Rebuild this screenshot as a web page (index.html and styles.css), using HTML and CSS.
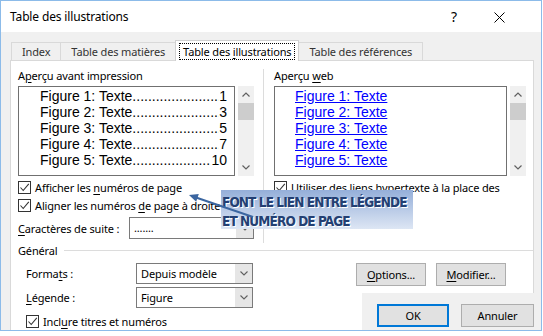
FILE: index.html
```html
<!DOCTYPE html>
<html lang="fr">
<head>
    <meta charset="UTF-8">
    <title>Table des illustrations</title>
    <link rel="stylesheet" href="styles.css">
</head>
<body>

<div class="dialog">
    <div class="titlebar">
        <span class="title">Table des illustrations</span>
        <span class="help">?</span>
        <span class="close">
            <svg width="11" height="11" viewBox="0 0 11 11"><path d="M0.5 0.5 L10.5 10.5 M10.5 0.5 L0.5 10.5" stroke="#000" stroke-width="1"/></svg>
        </span>
    </div>

    <!-- Tabs -->
    <div class="tabs">
        <div class="tab">Index</div>
        <div class="tab">Table des matières</div>
        <div class="tab active"><span class="focus">Table des <u>i</u>llustrations</span></div>
        <div class="tab">Table des références</div>
    </div>

    <div class="panel">
        <div class="previews">
            <!-- Print preview -->
            <div class="preview-col left">
                <div class="label">A<u>p</u>erçu avant impression</div>
                <div class="listrow">
                    <div class="listbox print">
                        <div class="entry"><span>Figure 1: Texte</span><span class="lead">........................................</span><span>1</span></div>
                        <div class="entry"><span>Figure 2: Texte</span><span class="lead">........................................</span><span>3</span></div>
                        <div class="entry"><span>Figure 3: Texte</span><span class="lead">........................................</span><span>5</span></div>
                        <div class="entry"><span>Figure 4: Texte</span><span class="lead">........................................</span><span>7</span></div>
                        <div class="entry"><span>Figure 5: Texte</span><span class="lead">........................................</span><span>10</span></div>
                    </div>
                    <div class="scrollbar">
                        <svg class="arrow" width="8" height="5" viewBox="0 0 8 5"><path d="M0.5 4.5 L4 1 L7.5 4.5" fill="none" stroke="#606060" stroke-width="1.2"/></svg>
                        <div class="thumb"></div>
                        <div class="track"></div>
                        <svg class="arrow" width="8" height="5" viewBox="0 0 8 5"><path d="M0.5 0.5 L4 4 L7.5 0.5" fill="none" stroke="#606060" stroke-width="1.2"/></svg>
                    </div>
                </div>

                <label class="check">
                    <span class="box"><svg width="11" height="11" viewBox="0 0 11 11"><path d="M1.5 5.5 L4.2 8.5 L9.8 1.8" fill="none" stroke="#333" stroke-width="1.1"/></svg></span>
                    <span>Afficher les <u>n</u>uméros de page</span>
                </label>
                <label class="check">
                    <span class="box"><svg width="11" height="11" viewBox="0 0 11 11"><path d="M1.5 5.5 L4.2 8.5 L9.8 1.8" fill="none" stroke="#333" stroke-width="1.1"/></svg></span>
                    <span>Aligner les numéros <u>d</u>e page à droite</span>
                </label>

                <div class="field-row suite">
                    <span class="field-label"><u>C</u>aractères de suite :</span>
                    <div class="select">
                        <span class="value">.......</span>
                        <span class="drop"><svg width="8" height="5" viewBox="0 0 8 5"><path d="M0.5 0.5 L4 4 L7.5 0.5" fill="none" stroke="#606060" stroke-width="1.1"/></svg></span>
                    </div>
                </div>
            </div>

            <!-- Web preview -->
            <div class="preview-col right">
                <div class="label">Aperçu <u>w</u>eb</div>
                <div class="listrow">
                    <div class="listbox web">
                        <a href="#">Figure 1: Texte</a>
                        <a href="#">Figure 2: Texte</a>
                        <a href="#">Figure 3: Texte</a>
                        <a href="#">Figure 4: Texte</a>
                        <a href="#">Figure 5: Texte</a>
                    </div>
                    <div class="scrollbar">
                        <svg class="arrow" width="8" height="5" viewBox="0 0 8 5"><path d="M0.5 4.5 L4 1 L7.5 4.5" fill="none" stroke="#606060" stroke-width="1.2"/></svg>
                        <div class="thumb"></div>
                        <div class="track"></div>
                        <svg class="arrow" width="8" height="5" viewBox="0 0 8 5"><path d="M0.5 0.5 L4 4 L7.5 0.5" fill="none" stroke="#606060" stroke-width="1.2"/></svg>
                    </div>
                </div>

                <label class="check">
                    <span class="box"><svg width="11" height="11" viewBox="0 0 11 11"><path d="M1.5 5.5 L4.2 8.5 L9.8 1.8" fill="none" stroke="#333" stroke-width="1.1"/></svg></span>
                    <span><u>U</u>tiliser des liens hypertexte à la place des</span>
                </label>
            </div>
        </div>

        <!-- General section -->
        <div class="group-title"><span>Général</span></div>
        <div class="general">
            <div class="fields">
                <div class="field-row">
                    <span class="field-label">Forma<u>t</u>s :</span>
                    <div class="select">
                        <span class="value">Depuis modèle</span>
                        <span class="drop"><svg width="8" height="5" viewBox="0 0 8 5"><path d="M0.5 0.5 L4 4 L7.5 0.5" fill="none" stroke="#606060" stroke-width="1.1"/></svg></span>
                    </div>
                </div>
                <div class="field-row">
                    <span class="field-label"><u>L</u>égende :</span>
                    <div class="select">
                        <span class="value">Figure</span>
                        <span class="drop"><svg width="8" height="5" viewBox="0 0 8 5"><path d="M0.5 0.5 L4 4 L7.5 0.5" fill="none" stroke="#606060" stroke-width="1.1"/></svg></span>
                    </div>
                </div>
                <label class="check">
                    <span class="box"><svg width="11" height="11" viewBox="0 0 11 11"><path d="M1.5 5.5 L4.2 8.5 L9.8 1.8" fill="none" stroke="#333" stroke-width="1.1"/></svg></span>
                    <span>Incl<u>u</u>re titres et numéros</span>
                </label>
            </div>
            <div class="actions">
                <button class="btn"><u>O</u>ptions...</button>
                <button class="btn"><u>M</u>odifier...</button>
            </div>
        </div>
    </div>

    <!-- Dialog buttons, drawn over the panel corner -->
    <div class="footer">
        <button class="btn default">OK</button>
        <button class="btn">Annuler</button>
    </div>

    <!-- Annotation -->
    <div class="note">FONT LE LIEN ENTRE LÉGENDE<br>ET NUMÉRO DE PAGE</div>
    <svg class="note-arrow" width="80" height="40" viewBox="0 0 80 40">
        <path d="M66 28 L9 8.5" stroke="#3b66a0" stroke-width="2" fill="none"/>
        <path d="M2 6 L11.8 5.1 L9.2 12.7 Z" fill="#3b66a0"/>
    </svg>
</div>

</body>
</html>
```

FILE: styles.css
```css
body { margin: 0; background: #fff; font-family: "Noto Sans", sans-serif; font-size: 11px; letter-spacing: -0.15px; color: #000; }
u { text-decoration: underline; text-underline-offset: 2px; }

.dialog { position: relative; width: 542px; height: 331px; box-sizing: border-box; border: 1px solid #8cbbe9; background: #f0f0f0; overflow: hidden; }

/* Title bar */
.titlebar { height: 31px; background: #fff; display: flex; align-items: center; padding-left: 9px; font-size: 12px; }
.title { flex: 1; }
.help { width: 20px; font-size: 14px; margin-right: 12px; text-align: center; }
.close { width: 46px; display: flex; justify-content: center; padding-top: 1px; margin-right: 19px; }

/* Tabs */
.tabs { display: flex; align-items: flex-end; height: 20px; margin: 8px 0 0 9px; }
.tab { height: 18px; line-height: 17px; padding: 0 10px; border: 1px solid #d9d9d9; border-bottom: none; margin-left: -1px; color: #333; box-sizing: border-box; }
.tab:first-child { margin-left: 1px; }
.tab.active { height: 21px; background: #fff; color: #000; position: relative; top: 1px; padding: 2px 4px 0; border-color: #d0d0d0; z-index: 1; }
.tab .focus { display: inline-block; line-height: 15px; padding: 0 3px; outline: 1px dotted #000; }

/* Panel */
.panel { width: 524px; height: 300px; box-sizing: border-box; margin-left: 9px; background: #fff; border: 1px solid #d9d9d9; padding: 8px 0 0 7px; }
.previews { display: flex; }
.preview-col { min-width: 0; }
.preview-col.left { width: 236px; flex-shrink: 0; padding-right: 9px; border-right: 1px solid #dcdcdc; padding-bottom: 4px; }
.preview-col.right { width: 252px; padding-left: 10px; }
.label { line-height: 14px; margin-bottom: 3px; white-space: nowrap; }

.listrow { display: flex; gap: 3px; height: 90px; }
.listbox { flex: 1; min-width: 0; border: 1px solid #707070; padding-top: 1px; font-family: "Liberation Sans", Arial, sans-serif; font-size: 14px; line-height: 16px; letter-spacing: 0; }
.listbox.print { padding-left: 21px; padding-right: 7px; }
.entry { display: flex; white-space: nowrap; }
.entry .lead { flex: 1; min-width: 0; overflow: hidden; }
.listbox.web { display: flex; flex-direction: column; align-items: flex-start; padding-left: 20px; }
.listbox.web a { color: #0000ff; text-underline-offset: 1px; }

.scrollbar { width: 16px; flex-shrink: 0; background: #f0f0f0; display: flex; flex-direction: column; align-items: center; }
.scrollbar .arrow { margin: 6px 0; flex-shrink: 0; }
.scrollbar .thumb { width: 16px; height: 17px; background: #cdcdcd; }
.scrollbar .track { flex: 1; }

/* Checkboxes */
.check { display: flex; align-items: center; gap: 4px; height: 13px; margin-top: 5px; white-space: nowrap; }
.check .box { width: 13px; height: 13px; box-sizing: border-box; border: 1px solid #333; background: #fff; display: flex; align-items: center; justify-content: center; flex-shrink: 0; }

/* Dropdowns */
.field-row { display: flex; align-items: center; white-space: nowrap; }
.field-row.suite { margin-top: 5px; }
.field-label { width: 111px; flex-shrink: 0; }
.select { display: flex; width: 125px; height: 22px; box-sizing: border-box; border: 1px solid #7a7a7a; background: #fff; }
.select .value { flex: 1; padding-left: 4px; line-height: 19px; }
.select .drop { width: 17px; background: #e6e6e6; display: flex; align-items: center; justify-content: center; }

/* General section */
.group-title { display: flex; align-items: center; height: 14px; }
.group-title::after { content: ""; flex: 1; border-top: 1px solid #dcdcdc; margin-left: 6px; }
.general { display: flex; justify-content: space-between; padding-top: 6px; }
.fields { padding-left: 8px; }
.fields .field-row { margin-bottom: 3px; }
.fields .field-label { width: 110px; }
.fields .select { width: 117px; height: 21px; }
.fields .check { margin-top: 7px; }
.actions { display: flex; gap: 10px; padding-right: 27px; }

/* Buttons */
.btn { width: 70px; height: 23px; font-family: inherit; font-size: 11px; letter-spacing: inherit; color: #000; background: #e1e1e1; border: 1px solid #adadad; padding: 0; }
.btn.default { width: 72px; border: 2px solid #0078d7; }

.footer { position: absolute; right: 0; bottom: 0; width: 179px; height: 37px; box-sizing: border-box; background: #f0f0f0; display: flex; justify-content: flex-end; gap: 12px; padding: 11px 7px 0 0; }
.footer .btn { width: 73px; }
.footer .btn.default { width: 72px; }

/* Annotation */
.note { position: absolute; left: 220px; top: 189px; width: 192px; height: 39px; box-sizing: border-box; padding: 3px 0 0 1px; background: linear-gradient(#95afd9, #dde6f4); font-family: "Liberation Sans Narrow", "DejaVu Sans Condensed", sans-serif; font-stretch: condensed; font-weight: bold; font-size: 13.5px; line-height: 19px; color: #233f73; text-shadow: 1px 1px 0 #fff; letter-spacing: -0.9px; white-space: nowrap; overflow: hidden; }
.note-arrow { position: absolute; left: 186px; top: 188px; }
```
